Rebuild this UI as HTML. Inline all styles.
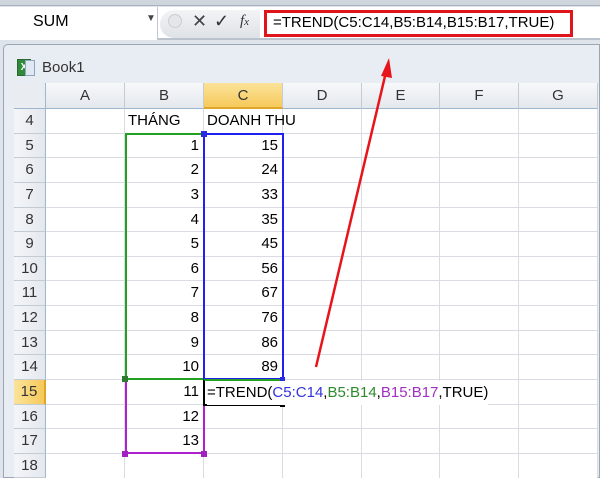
<!DOCTYPE html>
<html><head><style>
body{margin:0;width:600px;height:478px;overflow:hidden;background:#dfe4ea;font-family:"Liberation Sans",sans-serif;position:relative}
div{position:absolute;box-sizing:border-box}
.t{font-size:15px;color:#000;line-height:24px}
.ch{top:83px;height:26px;background:linear-gradient(#f6f8fa,#e4e8ee);border-right:1px solid #c5cbd3;border-bottom:1px solid #9eb6ce;text-align:center;font-size:15px;line-height:25px;color:#333}
.rh{left:14px;width:32px;background:linear-gradient(90deg,#f3f5f8,#e4e8ee);border-bottom:1px solid #c5cbd3;border-right:1px solid #9eb6ce;text-align:center;font-size:15px;line-height:24px;color:#333}
.hl{left:46px;width:552px;height:1px;background:#d9dde3}
.vl{top:109px;width:1px;height:369px;background:#d9dde3}
.n{width:74px;text-align:right;font-size:15px;line-height:24px}
.g{background:#22a022}.b{background:#2020f0}.p{background:#b020d0}
</style></head><body>
<div style="left:0;top:0;width:600px;height:6px;background:#cfd5dd;border-bottom:1px solid #a9b3bf"></div>
<div style="left:0;top:7px;width:600px;height:33px;background:#fff;border-bottom:2px solid #b9c2cd"></div>
<div style="left:0;top:7px;width:158px;height:33px;background:#fff;border-right:1px solid #c0c7d0"></div>
<div class="t" style="left:33px;top:10px;font-size:16px">SUM</div>
<div style="left:146px;top:13px;font-size:10px;color:#444">▼</div>
<div style="left:160px;top:10px;width:100px;height:28px;background:linear-gradient(#f3f4f6,#dfe2e6);border-radius:14px 0 0 14px"></div>
<div style="left:168px;top:14px;width:14px;height:14px;border-radius:50%;background:#e4e6ea;border:1px solid #ccc"></div>
<div style="left:192px;top:10px;font-size:18px;color:#444;line-height:22px">✕</div>
<div style="left:214px;top:10px;font-size:18px;color:#333;line-height:22px">✓</div>
<div style="left:240px;top:11px;font-size:15px;font-style:italic;font-family:'Liberation Serif',serif;color:#333;line-height:20px">f<span style="font-size:11px">x</span></div>
<div style="left:264px;top:10px;width:309px;height:27px;border:3px solid #e0151b;background:#fff"></div>
<div class="t" style="left:273px;top:10px;font-size:15px;line-height:25px">=TREND(C5:C14,B5:B14,B15:B17,TRUE)</div>
<div style="left:3px;top:44px;width:597px;height:434px;background:#e8edf3;border:1px solid #9aa6b3;border-radius:5px 0 0 0"></div>
<div style="left:17px;top:59px;width:14px;height:17px;background:#2f8a3a;border:1px solid #2a6a30;color:#fff;font-size:10px;line-height:15px;text-align:center;font-weight:bold">X</div>
<div style="left:25px;top:60px;width:10px;height:16px;background:#dfe8f3;border:1px solid #8fa5bc"></div>
<div class="t" style="left:42px;top:56px;font-size:15px;color:#333">Book1</div>
<div style="left:14px;top:83px;width:584px;height:395px;background:#fff"></div>
<div style="left:14px;top:83px;width:32px;height:26px;background:#e9edf2;border-right:1px solid #9eb6ce;border-bottom:1px solid #9eb6ce"></div>
<div class="ch" style="left:46px;width:79px">A</div>
<div class="ch" style="left:125px;width:79px">B</div>
<div class="ch" style="left:204px;width:79px;background:linear-gradient(#fbe39a,#f6c95a);border-bottom:2px solid #e0a62a">C</div>
<div class="ch" style="left:283px;width:79px">D</div>
<div class="ch" style="left:362px;width:78px">E</div>
<div class="ch" style="left:440px;width:79px">F</div>
<div class="ch" style="left:519px;width:79px">G</div>
<div class="rh" style="top:109px;height:25px">4</div>
<div class="rh" style="top:134px;height:24px">5</div>
<div class="rh" style="top:158px;height:25px">6</div>
<div class="rh" style="top:183px;height:25px">7</div>
<div class="rh" style="top:208px;height:24px">8</div>
<div class="rh" style="top:232px;height:25px">9</div>
<div class="rh" style="top:257px;height:24px">10</div>
<div class="rh" style="top:281px;height:25px">11</div>
<div class="rh" style="top:306px;height:25px">12</div>
<div class="rh" style="top:331px;height:24px">13</div>
<div class="rh" style="top:355px;height:25px">14</div>
<div class="rh" style="top:380px;height:25px;background:linear-gradient(90deg,#fbe39a,#f6c95a);border-right:2px solid #e0a62a">15</div>
<div class="rh" style="top:405px;height:24px">16</div>
<div class="rh" style="top:429px;height:25px">17</div>
<div class="rh" style="top:454px;height:24px">18</div>
<div class="hl" style="top:133px"></div><div class="hl" style="top:157px"></div><div class="hl" style="top:182px"></div><div class="hl" style="top:207px"></div><div class="hl" style="top:231px"></div><div class="hl" style="top:256px"></div><div class="hl" style="top:280px"></div><div class="hl" style="top:305px"></div><div class="hl" style="top:330px"></div><div class="hl" style="top:354px"></div><div class="hl" style="top:379px"></div><div class="hl" style="top:404px"></div><div class="hl" style="top:428px"></div><div class="hl" style="top:453px"></div>
<div class="vl" style="left:124px"></div><div class="vl" style="left:203px"></div><div class="vl" style="left:282px"></div><div class="vl" style="left:361px"></div><div class="vl" style="left:439px"></div><div class="vl" style="left:518px"></div><div class="vl" style="left:597px"></div>
<div class="t" style="left:128px;top:109px">THÁNG</div>
<div class="t" style="left:207px;top:109px">DOANH THU</div>
<div class="n" style="left:125px;top:134px">1</div><div class="n" style="left:204px;top:134px">15</div>
<div class="n" style="left:125px;top:158px">2</div><div class="n" style="left:204px;top:158px">24</div>
<div class="n" style="left:125px;top:183px">3</div><div class="n" style="left:204px;top:183px">33</div>
<div class="n" style="left:125px;top:208px">4</div><div class="n" style="left:204px;top:208px">35</div>
<div class="n" style="left:125px;top:232px">5</div><div class="n" style="left:204px;top:232px">45</div>
<div class="n" style="left:125px;top:257px">6</div><div class="n" style="left:204px;top:257px">56</div>
<div class="n" style="left:125px;top:281px">7</div><div class="n" style="left:204px;top:281px">67</div>
<div class="n" style="left:125px;top:306px">8</div><div class="n" style="left:204px;top:306px">76</div>
<div class="n" style="left:125px;top:331px">9</div><div class="n" style="left:204px;top:331px">86</div>
<div class="n" style="left:125px;top:355px">10</div><div class="n" style="left:204px;top:355px">89</div>
<div class="n" style="left:125px;top:380px">11</div>
<div class="n" style="left:125px;top:405px">12</div>
<div class="n" style="left:125px;top:429px">13</div>
<!-- green box -->
<div class="g" style="left:125px;top:133px;width:2px;height:247px"></div>
<div class="g" style="left:125px;top:133px;width:79px;height:2px"></div>
<div class="g" style="left:125px;top:378px;width:79px;height:2px"></div>
<!-- blue box -->
<div class="b" style="left:203px;top:133px;width:2px;height:247px"></div>
<div class="b" style="left:282px;top:133px;width:2px;height:247px"></div>
<div class="b" style="left:204px;top:133px;width:80px;height:2px"></div>
<div class="b" style="left:204px;top:378px;width:80px;height:1px"></div>
<!-- purple box -->
<div class="p" style="left:125px;top:380px;width:2px;height:74px"></div>
<div class="p" style="left:203px;top:406px;width:2px;height:48px"></div>
<div class="p" style="left:125px;top:452px;width:80px;height:2px"></div>
<div style="left:203px;top:379px;width:81px;height:27px;border:2px solid #000;border-top-color:#22a022"></div>
<div style="left:280px;top:402px;width:5px;height:5px;background:#000"></div>
<div style="left:122px;top:376px;width:6px;height:6px;background:#2e7a2e"></div>
<div style="left:122px;top:451px;width:6px;height:6px;background:#a020c0"></div>
<div style="left:201px;top:451px;width:6px;height:6px;background:#a020c0"></div>
<div style="left:201px;top:131px;width:6px;height:6px;background:#2a2ae0"></div>
<div style="left:280px;top:377px;width:5px;height:5px;background:#2a2ae0"></div>
<div class="t" style="left:207px;top:381px;background:#fff">=TREND(<span style="color:#3333dd">C5:C14</span>,<span style="color:#2e8a2e">B5:B14</span>,<span style="color:#a030c0">B15:B17</span>,TRUE)</div>
<svg style="position:absolute;left:0;top:0" width="600" height="478"><line x1="316" y1="367" x2="386" y2="72" stroke="#e8141b" stroke-width="2.5"/><polygon points="389,58 381,76 392,78" fill="#e8141b"/></svg>
</body></html>
